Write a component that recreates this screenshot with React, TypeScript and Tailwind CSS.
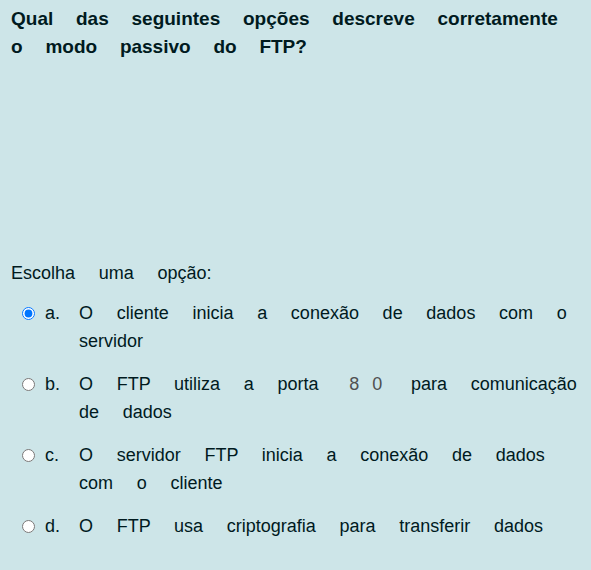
import React from "react";

const options: { key: string; content: React.ReactNode; checked?: boolean }[] = [
  { key: "a.", content: "O cliente inicia a conexão de dados com o servidor", checked: true },
  {
    key: "b.",
    content: (
      <>
        O FTP utiliza a porta{" "}
        <span className="ml-[7px] mr-[1px] text-[#505050] tracking-[4px] [word-spacing:0px]">8 0</span> para comunicação de dados
      </>
    ),
  },
  { key: "c.", content: "O servidor FTP inicia a conexão de dados com o cliente" },
  { key: "d.", content: "O FTP usa criptografia para transferir dados" },
];

export default function App() {
  return (
    <div
      className="min-h-[570px] w-full bg-[#cde5e8] pl-[11px] pr-[8px] pt-[5px] text-[#001a1e]"
      style={{ fontFamily: '"Liberation Sans", Arial, sans-serif' }}
    >
      <div className="text-[19px] font-bold leading-[28px] [word-spacing:17.5px]">
        Qual das seguintes opções descreve corretamente o modo passivo do FTP?
      </div>
      <div className="mt-[198px] text-[18px] leading-[28px] [word-spacing:18.7px]">Escolha uma opção:</div>
      <div className="mt-[12px] flex flex-col gap-[15px] [word-spacing:18.7px]">
        {options.map((o) => (
          <div key={o.key} className="flex items-start text-[18px] leading-[28px]">
            <div className="flex h-[28px] w-[34px] shrink-0 items-center justify-center pl-[1px]">
              <input
                type="radio"
                name="q"
                defaultChecked={o.checked}
                className="m-0 h-[13px] w-[13px]"
              />
            </div>
            <span className="w-[34px] shrink-0">{o.key}</span>
            <span className="flex-1">{o.content}</span>
          </div>
        ))}
      </div>
    </div>
  );
}
